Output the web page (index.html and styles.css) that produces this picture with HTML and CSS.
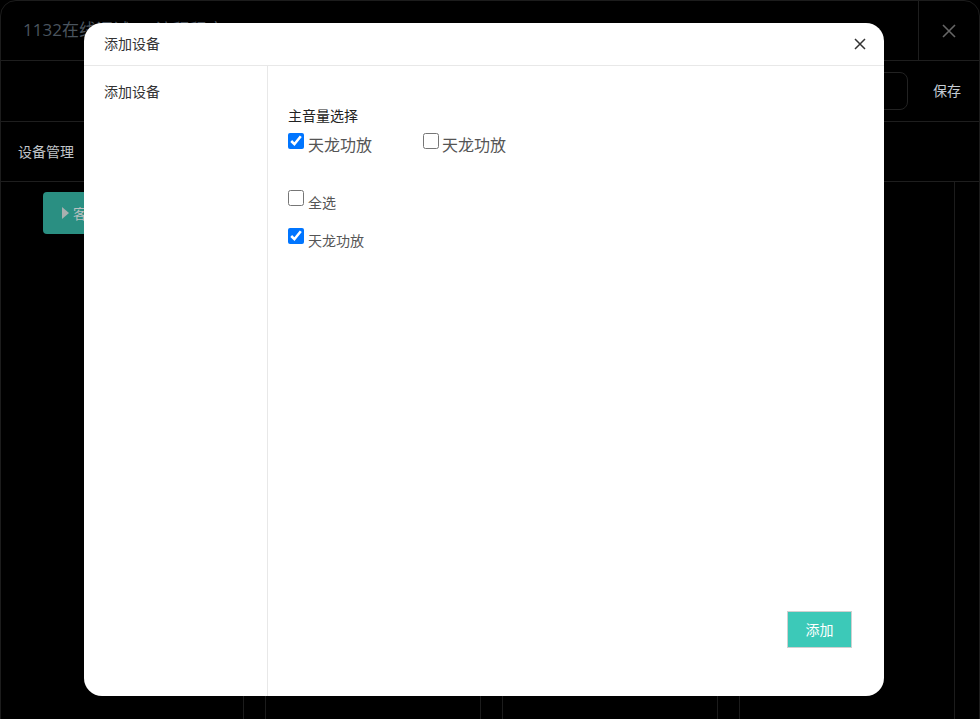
FILE: index.html
```html
<!DOCTYPE html>
<html lang="zh-CN">
<head>
<meta charset="utf-8">
<title>添加设备</title>
<link rel="stylesheet" href="styles.css">
</head>
<body>
<div class="app">
  <header class="app-head">
    <div class="app-title">1132在线调试 — 流程程序</div>
    <div class="app-close">
      <svg width="14" height="14" viewBox="0 0 14 14"><path d="M1 1L13 13M13 1L1 13" stroke="#666" stroke-width="1.6" fill="none"/></svg>
    </div>
  </header>
  <div class="toolbar">
    <button class="tb-btn tb-outline">删除</button>
    <button class="tb-btn">保存</button>
  </div>
  <div class="tabs"><span class="tab">设备管理</span></div>
  <div class="board">
    <div class="col col-first"><button class="run-btn"><span class="tri"></span>客户端</button></div>
    <div class="col"></div>
    <div class="col"></div>
    <div class="col"></div>
  </div>
</div>

<div class="modal">
  <div class="modal-head">
    <span class="modal-title">添加设备</span>
    <svg class="modal-close" width="12" height="12" viewBox="0 0 12 12"><path d="M1 1L11 11M11 1L1 11" stroke="#333" stroke-width="1.5" fill="none"/></svg>
  </div>
  <div class="modal-body">
    <aside class="side">
      <div class="side-item">添加设备</div>
    </aside>
    <section class="content">
      <div class="field-title">主音量选择</div>
      <div class="row row-main">
        <label class="chk chk-lg"><input type="checkbox" checked><span>天龙功放</span></label>
        <label class="chk chk-lg chk-second"><input type="checkbox"><span>天龙功放</span></label>
      </div>
      <div class="row row-all">
        <label class="chk"><input type="checkbox"><span>全选</span></label>
      </div>
      <div class="row row-item">
        <label class="chk"><input type="checkbox" checked><span>天龙功放</span></label>
      </div>
      <button class="add-btn">添加</button>
    </section>
  </div>
</div>
</body>
</html>
```

FILE: styles.css
```css
html, body {
  margin: 0;
  padding: 0;
  background: #000;
  width: 980px;
  height: 719px;
  overflow: hidden;
  font-family: "Noto Sans CJK SC", "Noto Sans", sans-serif;
}

.app {
  width: 980px;
  height: 740px;
  box-sizing: border-box;
  border: 1px solid #1c1c1c;
  border-radius: 16px 16px 0 0;
  display: flex;
  flex-direction: column;
}

.app-head {
  height: 59px;
  border-bottom: 1px solid #1e1e1e;
  display: flex;
  align-items: stretch;
  flex-shrink: 0;
}
.app-title {
  flex: 1;
  padding-left: 22px;
  display: flex;
  align-items: center;
  font-family: "Open Sans", "Noto Sans CJK SC", sans-serif;
  font-size: 17px;
  color: #4a545e;
  padding-bottom: 4px;
}
.app-close {
  width: 60px;
  border-left: 1px solid #1e1e1e;
  display: flex;
  align-items: center;
  justify-content: center;
}

.toolbar {
  height: 60px;
  border-bottom: 1px solid #1e1e1e;
  display: flex;
  align-items: center;
  justify-content: flex-end;
  padding-right: 3px;
  flex-shrink: 0;
}
.tb-btn {
  background: transparent;
  border: 1px solid transparent;
  color: #c4ccd4;
  font-family: inherit;
  font-size: 14px;
  height: 38px;
  padding: 0 14px 2px;
  border-radius: 8px;
}
.tb-outline {
  border-color: #222;
  width: 80px;
  margin-right: 10px;
}

.tabs {
  height: 60px;
  border-bottom: 1px solid #1e1e1e;
  display: flex;
  align-items: center;
  padding-left: 17px;
  padding-bottom: 2px;
  box-sizing: border-box;
  flex-shrink: 0;
}
.tab {
  font-size: 14px;
  color: #c0c4c8;
}

.board {
  flex: 1;
  display: grid;
  grid-template-columns: repeat(4, 216px);
  column-gap: 21px;
  padding: 0 24px 0 27px;
}
.col {
  border-left: 1px solid #1c1c1c;
  border-right: 1px solid #1c1c1c;
  padding: 10px 14px;
}
.col-first {
  border-left-color: transparent;
}
.run-btn {
  height: 42px;
  width: 110px;
  background: #2a8f82;
  border: none;
  border-radius: 4px;
  color: #b8c0c0;
  font-family: inherit;
  font-size: 14px;
  display: flex;
  align-items: center;
  padding-left: 19px;
}
.tri {
  width: 0;
  height: 0;
  border-left: 7px solid #a8b0b0;
  border-top: 6px solid transparent;
  border-bottom: 6px solid transparent;
  margin-right: 4px;
}

/* modal */
.modal {
  position: absolute;
  left: 84px;
  top: 23px;
  width: 800px;
  height: 673px;
  background: #fff;
  border-radius: 18px;
  overflow: hidden;
  display: flex;
  flex-direction: column;
}
.modal-head {
  height: 42px;
  border-bottom: 1px solid #e8e8e8;
  display: flex;
  align-items: center;
  justify-content: space-between;
  padding: 0 18px 0 20px;
  flex-shrink: 0;
}
.modal-title {
  font-size: 14px;
  color: #333;
  line-height: 20px;
  margin-top: -2px;
}
.modal-close {
  margin-top: -1px;
}
.modal-body {
  flex: 1;
  display: flex;
}
.side {
  width: 183px;
  border-right: 1px solid #e8e8e8;
}
.side-item {
  padding: 15px 20px;
  font-size: 14px;
  line-height: 20px;
  color: #333;
}
.content {
  flex: 1;
  display: flex;
  flex-direction: column;
  padding: 39px 32px 48px 20px;
}
.field-title {
  font-size: 14px;
  line-height: 20px;
  color: #222;
}
.row {
  display: flex;
  align-items: flex-start;
}
.row-main { margin-top: 8px; }
.row-all { margin-top: 35px; }
.row-item { margin-top: 16px; }

.chk {
  display: flex;
  align-items: flex-start;
  color: #555;
  font-size: 14px;
}
.chk input {
  width: 16px;
  height: 16px;
  margin: 0;
}
.chk span {
  margin-left: 4px;
  line-height: 20px;
  margin-top: 2px;
}
.chk-lg span {
  font-size: 16px;
  line-height: 22px;
  margin-top: 0;
}
.chk-second {
  margin-left: 51px;
}
.chk-second span {
  margin-left: 3px;
}

.add-btn {
  margin-top: auto;
  align-self: flex-end;
  width: 65px;
  height: 37px;
  background: #3cc9b8;
  border: 1px solid #d0d0d0;
  color: #fff;
  font-family: inherit;
  font-size: 14px;
  padding: 0 0 2px;
}
```
